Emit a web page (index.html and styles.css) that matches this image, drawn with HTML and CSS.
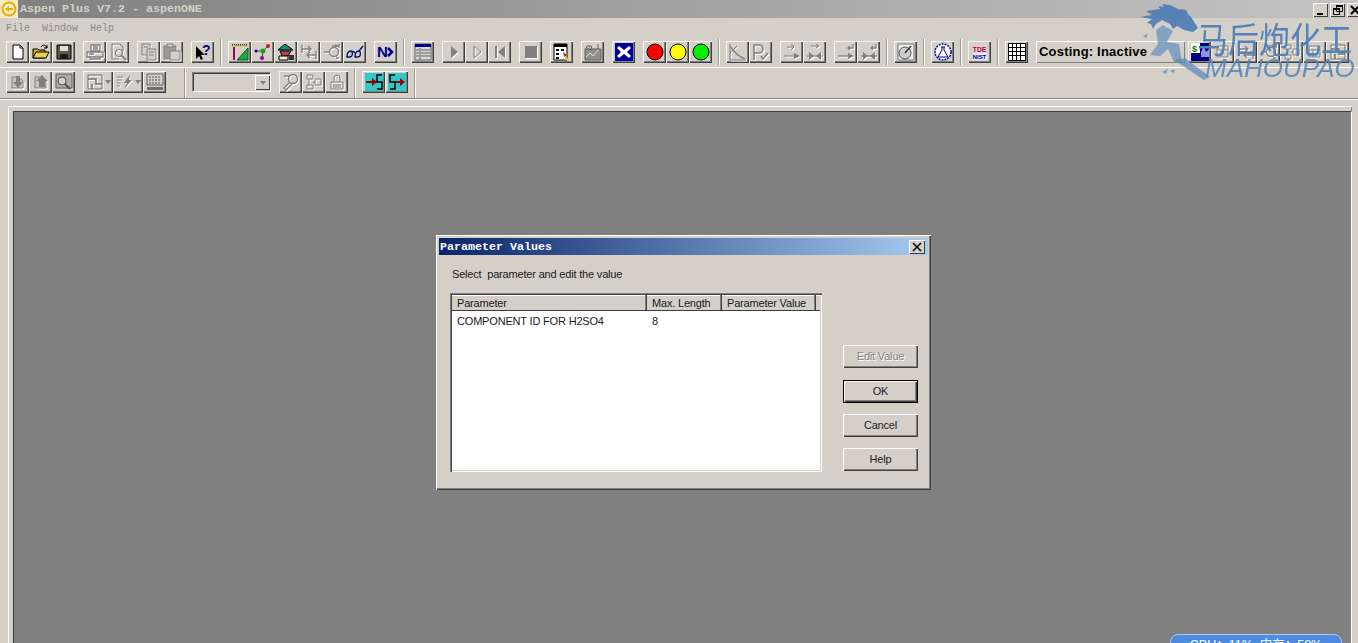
FILE: index.html
```html
<!DOCTYPE html>
<html lang="en">
<head>
<meta charset="utf-8">
<title>Aspen Plus V7.2 - aspenONE</title>
<link rel="stylesheet" href="styles.css">
</head>
<body>
<svg class="defs" width="0" height="0">
  <symbol id="i-new" viewBox="0 0 18 18"><path d="M4 2h7l3 3v11H4z" fill="#fff" stroke="#000"/><path d="M11 2v3h3" fill="none" stroke="#000"/></symbol>
  <symbol id="i-open" viewBox="0 0 18 18"><path d="M1 15V6h5l1 1h6v8z" fill="#c8b030" stroke="#000"/><path d="M1 15l3-6h13l-3 6z" fill="#e8d050" stroke="#000"/><path d="M9 4c2-3 5-2 6 1M15 2v3h-3" fill="none" stroke="#000"/></symbol>
  <symbol id="i-save" viewBox="0 0 18 18"><path d="M2 2h14v14H2z" fill="#5a5a40" stroke="#000"/><path d="M5 3h8v5H5z" fill="#ddd"/><path d="M5 11h8v5H5z" fill="#1a1a1a"/></symbol>
  <symbol id="i-print" viewBox="0 0 18 18"><g fill="none" stroke="#808080" stroke-width="1.300"><path d="M5 2h9v6H5zM1 9h16v5H1zM4 14v2h10v-2"/><path d="M3 11h5M7 4h5M7 6h5"/></g></symbol>
  <symbol id="i-preview" viewBox="0 0 18 18"><g fill="none" stroke="#808080" stroke-width="1.200"><path d="M3 1h8l3 3v4M3 1v15h7"/><circle cx="10" cy="10" r="3.500"/><path d="M12 12l5 5" stroke-width="2"/></g></symbol>
  <symbol id="i-copy" viewBox="0 0 18 18"><g fill="#d4d0c8" stroke="#808080"><path d="M2 1h8v11H2z"/><path d="M7 6h9v11H7z"/><path d="M9 9h5M9 12h5M4 4h4"/></g></symbol>
  <symbol id="i-paste" viewBox="0 0 18 18"><g stroke="#808080"><path d="M1 3h12v13H1z" fill="#9c9c96"/><path d="M4 1h6v3H4z" fill="#d4d0c8"/><path d="M7 8h10v9H7z" fill="#d4d0c8"/></g></symbol>
  <symbol id="i-flow" viewBox="0 0 18 18"><path d="M1 2h16" stroke="#000" stroke-width="1.500" stroke-dasharray="1 1"/><path d="M1 3h16" stroke="#e0c020"/><path d="M3 4v13" stroke="#a00060" stroke-width="2"/><path d="M6 17L17 5v12z" fill="#20a840" stroke="#006020"/></symbol>
  <symbol id="i-mol" viewBox="0 0 18 18"><path d="M2 8h7l5-5M9 8l-1 7" stroke="#444" fill="none"/><circle cx="2" cy="8" r="1.500" fill="#0000c0"/><circle cx="9" cy="8" r="2.500" fill="#20a020"/><circle cx="14" cy="3" r="2" fill="#c02020"/><circle cx="8" cy="15" r="2" fill="#a00090"/></symbol>
  <symbol id="i-house" viewBox="0 0 18 18"><path d="M1 7l7-6 8 6z" fill="#10907c" stroke="#000"/><path d="M3 8h11l-3 5H5z" fill="#c04060" stroke="#000"/><path d="M2 13h9v4H2z" fill="#f0e8d0" stroke="#000"/><path d="M12 12h5v5h-5z" fill="#333"/></symbol>
  <symbol id="i-swap" viewBox="0 0 18 18"><g fill="none" stroke="#808080" stroke-width="1.400"><path d="M2 6h9M8 3l3 3-3 3"/><path d="M16 12H7M10 9l-3 3 3 3"/><path d="M2 2v8M16 8v8"/></g></symbol>
  <symbol id="i-pump" viewBox="0 0 18 18"><g fill="none" stroke="#808080" stroke-width="1.400"><path d="M1 9h6"/><circle cx="11" cy="9" r="4.500"/><path d="M9 3h6M13 15h3M16 1v4M12 2l3 1-3 1"/></g></symbol>
  <symbol id="i-glass" viewBox="0 0 18 18"><g fill="none" stroke="#001070" stroke-width="1.300"><path d="M1 14c0-4 2-6 4-6s2 6-1 6-3 0-3 0zM9 14c0-4 2-6 4-6s2 6-1 6-3 0-3 0z"/><path d="M5 9c1-1 3-1 4 1M13 8l4-5"/></g></symbol>
  <symbol id="i-table" viewBox="0 0 18 18"><path d="M1 1h16v16H1z" fill="#d8d8d8" stroke="#606060"/><path d="M1 1h16v3H1z" fill="#00008c"/><path d="M6 5v12M7 7h9M7 10h9M7 13h9M2 7h3M2 10h3M2 13h3" stroke="#606060"/></symbol>
  <symbol id="i-play" viewBox="0 0 18 18"><path d="M6 3l7 6-7 6z" fill="#808080"/></symbol>
  <symbol id="i-step" viewBox="0 0 18 18"><path d="M6 3l7 6-7 6z" fill="none" stroke="#808080"/></symbol>
  <symbol id="i-rew" viewBox="0 0 18 18"><path d="M4 3h2v12H4zM14 3v12L7 9z" fill="#808080"/></symbol>
  <symbol id="i-stop" viewBox="0 0 18 18"><path d="M3 3h12v12H3z" fill="#808080"/></symbol>
  <symbol id="i-film" viewBox="0 0 18 18"><path d="M1 1h13v16H1z" fill="#fff" stroke="#000"/><path d="M1 1h13v3H1z" fill="#000"/><path d="M3 6h3v2H3zM3 10h3v2H3zM3 14h3v2H3zM8 6h3v2H8z" fill="#000"/><path d="M10 9l4 3-3 2z" fill="#c03020"/><path d="M12 13l5 4h-5z" fill="#f0c020"/></symbol>
  <symbol id="i-chart" viewBox="0 0 18 18"><path d="M1 6h16v11H1z" fill="#909088" stroke="#606060"/><path d="M2 14l4-4 3 3 5-6" stroke="#e0e0e0" fill="none"/><path d="M3 3h4l1 3H2zM14 1v5" stroke="#606060" fill="#c0c0c0"/></symbol>
  <symbol id="i-x" viewBox="0 0 18 18"><path d="M0 0h18v18H0z" fill="#0000a0"/><path d="M4 3l5 4 5-4 2 2-4 4 4 4-2 2-5-4-5 4-2-2 4-4-4-4z" fill="#fff"/></symbol>
  <symbol id="i-red" viewBox="0 0 18 18"><circle cx="9" cy="9" r="8" fill="#fe0000" stroke="#000"/></symbol>
  <symbol id="i-yellow" viewBox="0 0 18 18"><circle cx="9" cy="9" r="8" fill="#fefe00" stroke="#000"/></symbol>
  <symbol id="i-green" viewBox="0 0 18 18"><circle cx="9" cy="9" r="8" fill="#00f000" stroke="#000"/></symbol>
  <symbol id="i-curve" viewBox="0 0 18 18"><g fill="none" stroke="#808080"><path d="M1 1v16h16"/><path d="M1 3c4 6 9 11 15 13" stroke-width="1.500"/><path d="M1 10L8 3"/></g></symbol>
  <symbol id="i-pcheck" viewBox="0 0 18 18"><g fill="none" stroke="#808080" stroke-width="1.600"><path d="M2 17V2h5a4 4 0 0 1 0 8H2"/><path d="M9 13l2 3 5-6"/></g></symbol>
  <symbol id="i-arrows" viewBox="0 0 18 18"><g fill="none" stroke="#808080"><path d="M4 4h6M8 1l3 3-3 3" /><path d="M1 13h11"/></g><path d="M11 10l6 3-6 3z" fill="#808080"/></symbol>
  <symbol id="i-merge" viewBox="0 0 18 18"><g fill="none" stroke="#808080"><path d="M5 3h7M10 1l3 2-3 2"/><path d="M1 13h16"/></g><path d="M3 9l5 4-5 4zM15 9l-5 4 5 4z" fill="#808080"/></symbol>
  <symbol id="i-aret" viewBox="0 0 18 18"><g fill="none" stroke="#808080" stroke-width="1.300"><path d="M11 5h5V1M13 3l-2 2 2 2"/><path d="M1 13h11"/></g><path d="M11 10l6 3-6 3z" fill="#808080"/></symbol>
  <symbol id="i-mret" viewBox="0 0 18 18"><g fill="none" stroke="#808080" stroke-width="1.300"><path d="M11 5h5V1M13 3l-2 2 2 2"/><path d="M1 13h16"/></g><path d="M3 9l5 4-5 4zM15 9l-5 4 5 4z" fill="#808080"/></symbol>
  <symbol id="i-gauge" viewBox="0 0 18 18"><path d="M1 1h16v16H1z" fill="#eee" stroke="#777"/><circle cx="8" cy="10" r="6" fill="#ccc" stroke="#555"/><path d="M8 10l6-7" stroke="#333" stroke-width="1.500"/></symbol>
  <symbol id="i-flask" viewBox="0 0 18 18"><circle cx="9" cy="9" r="8" fill="#fff" stroke="#0000a0" stroke-dasharray="2 1" stroke-width="1.500"/><path d="M7 4h4M8 4v3l-4 7h10l-4-7V4" fill="none" stroke="#0000a0"/></symbol>
  <symbol id="i-grid" viewBox="0 0 18 18"><path d="M0.500 0.500h17v17H.5zM.5 4.500h17M.5 8.500h17M.5 12.500h17M4.500 .5v17M8.500 .5v17M12.500 .5v17" fill="#fff" stroke="#000"/></symbol>
  <symbol id="i-faint" viewBox="0 0 18 18"><g fill="none" stroke="#808080"><path d="M3 3h11v11H3zM3 7h11M7 7v7"/></g></symbol>
  <symbol id="i-down" viewBox="0 0 18 18"><path d="M3 4h7l4 4v7H3z" fill="#c8c4bc" stroke="#808080"/><path d="M7 3h4v6h3l-5 6-5-6h3z" fill="#808080"/></symbol>
  <symbol id="i-up" viewBox="0 0 18 18"><path d="M3 4h7l4 4v7H3z" fill="#c8c4bc" stroke="#808080"/><path d="M10 2l6 6h-3v6H7V8H4z" fill="#808080"/></symbol>
  <symbol id="i-screen" viewBox="0 0 18 18"><path d="M1 1h16v14H1z" fill="#b0aca4" stroke="#606060"/><circle cx="7" cy="8" r="4" fill="#d4d0c8" stroke="#505050"/><path d="M10 11l5 5" stroke="#505050" stroke-width="2"/></symbol>
  <symbol id="i-plan" viewBox="0 0 18 18"><g fill="none" stroke="#707070"><path d="M2 2h14v14H2z"/><path d="M2 6h8v5h6M6 11v5" stroke-width="1.500"/></g></symbol>
  <symbol id="i-bolt" viewBox="0 0 18 18"><g fill="none" stroke="#808080"><path d="M1 4h6M1 7h5M1 10h4M1 13h3"/></g><path d="M14 2L8 10h3l-3 6 8-9h-3z" fill="#808080"/></symbol>
  <symbol id="i-kbd" viewBox="0 0 18 18"><path d="M1 1h16v11H1z" fill="#d4d0c8" stroke="#606060"/><path d="M3 4h12M3 7h12M3 10h12" stroke="#505050" stroke-dasharray="2 1"/><path d="M1 14h16v3H1z" fill="#707070"/></symbol>
  <symbol id="i-find" viewBox="0 0 18 18"><g fill="none" stroke="#808080" stroke-width="1.400"><circle cx="11" cy="6" r="4.500"/><path d="M8 9l-6 6 2 2 6-6M2 3h5"/></g></symbol>
  <symbol id="i-blocks" viewBox="0 0 18 18"><g fill="none" stroke="#808080"><path d="M2 2h6v4H2zM2 12h6v4H2zM10 6h6v6h-6zM4 6v6M8 9h2"/></g></symbol>
  <symbol id="i-lock" viewBox="0 0 18 18"><g fill="none" stroke="#808080"><path d="M3 9h12v7H3zM6 9V5a3 3 0 0 1 6 0v4M5 12h8M5 14h8"/></g></symbol>
  <symbol id="i-sin" viewBox="0 0 18 18"><path d="M0 0h18v18H0z" fill="#30c8c8"/><path d="M1 9h8" stroke="#a00000" stroke-width="2"/><path d="M7 5l5 4-5 4z" fill="#a00000"/><path d="M17 2h-5v7h5v7h-5" fill="none" stroke="#000" stroke-width="1.500"/></symbol>
  <symbol id="i-sout" viewBox="0 0 18 18"><path d="M0 0h18v18H0z" fill="#30c8c8"/><path d="M6 9h8" stroke="#a00000" stroke-width="2"/><path d="M12 5l5 4-5 4z" fill="#a00000"/><path d="M7 2H2v7h5v7H2" fill="none" stroke="#000" stroke-width="1.500"/></symbol>
</svg>

<div class="app">
  <header class="titlebar">
    <svg class="appicon" viewBox="0 0 18 18"><path d="M0 0h18v18H0z" fill="#f6ecc0"/><circle cx="9" cy="9" r="6.500" fill="#fff2b8" stroke="#e8a818" stroke-width="2"/><path d="M5 9l4-3v2h4v2H9v2z" fill="#e8a818"/></svg>
    <span class="apptitle">Aspen Plus V7.2 - aspenONE</span>
    <div class="winbtns">
      <span class="winbtn"><svg viewBox="0 0 12 12"><path d="M2 9h6v2H2z"/></svg></span>
      <span class="winbtn"><svg viewBox="0 0 12 12"><path d="M4.500 1.500h6v6h-6zM1.500 4.500h6v6h-6z" fill="#d4d0c8" stroke="#000"/><path d="M4 1h7v2H4zM1 4h7v2H1z"/></svg></span>
      <span class="winbtn"><svg viewBox="0 0 12 12"><path d="M2 2l8 8M10 2l-8 8" stroke="#000" stroke-width="2"/></svg></span>
    </div>
  </header>

  <nav class="menubar"><span>File</span><span>Window</span><span>Help</span></nav>

  <div class="toolbar row1">
    <div class="grp"><b class="tb"><svg><use href="#i-new"/></svg></b><b class="tb"><svg><use href="#i-open"/></svg></b><b class="tb"><svg><use href="#i-save"/></svg></b></div>
    <div class="grp"><b class="tb"><svg class="dis"><use href="#i-print"/></svg></b><b class="tb"><svg class="dis"><use href="#i-preview"/></svg></b></div>
    <div class="grp"><b class="tb"><svg class="dis"><use href="#i-copy"/></svg></b><b class="tb"><svg class="dis"><use href="#i-paste"/></svg></b></div>
    <div class="grp sep"><b class="tb"><svg viewBox="0 0 18 18"><path d="M2 3v13l3-3 2 4 2-1-2-4h4z" fill="#000"/><text x="8" y="12" class="g-q">?</text></svg></b></div>
    <div class="grp"><b class="tb"><svg><use href="#i-flow"/></svg></b><b class="tb"><svg><use href="#i-mol"/></svg></b><b class="tb"><svg><use href="#i-house"/></svg></b><b class="tb"><svg class="dis"><use href="#i-swap"/></svg></b><b class="tb"><svg class="dis"><use href="#i-pump"/></svg></b><b class="tb"><svg><use href="#i-glass"/></svg></b></div>
    <div class="grp sep"><b class="tb"><svg viewBox="0 0 18 18"><text x="0" y="14" class="g-n">N</text><path d="M11 5l4 4-4 4" fill="none" stroke="#000090" stroke-width="2.500"/></svg></b></div>
    <div class="grp"><b class="tb"><svg><use href="#i-table"/></svg></b></div>
    <div class="grp"><b class="tb"><svg class="dis"><use href="#i-play"/></svg></b><b class="tb"><svg class="dis"><use href="#i-step"/></svg></b><b class="tb"><svg class="dis"><use href="#i-rew"/></svg></b></div>
    <div class="grp"><b class="tb"><svg class="dis"><use href="#i-stop"/></svg></b></div>
    <div class="grp"><b class="tb"><svg><use href="#i-film"/></svg></b></div>
    <div class="grp"><b class="tb"><svg><use href="#i-chart"/></svg></b></div>
    <div class="grp"><b class="tb"><svg><use href="#i-x"/></svg></b></div>
    <div class="grp sep"><b class="tb"><svg><use href="#i-red"/></svg></b><b class="tb"><svg><use href="#i-yellow"/></svg></b><b class="tb"><svg><use href="#i-green"/></svg></b></div>
    <div class="grp"><b class="tb"><svg class="dis"><use href="#i-curve"/></svg></b><b class="tb"><svg class="dis"><use href="#i-pcheck"/></svg></b></div>
    <div class="grp"><b class="tb"><svg class="dis"><use href="#i-arrows"/></svg></b><b class="tb"><svg class="dis"><use href="#i-merge"/></svg></b></div>
    <div class="grp sep"><b class="tb"><svg class="dis"><use href="#i-aret"/></svg></b><b class="tb"><svg class="dis"><use href="#i-mret"/></svg></b></div>
    <div class="grp sep"><b class="tb"><svg><use href="#i-gauge"/></svg></b></div>
    <div class="grp sep"><b class="tb"><svg><use href="#i-flask"/></svg></b></div>
    <div class="grp sep"><b class="tb"><svg viewBox="0 0 18 20"><path d="M1 1h16v18H1z" fill="#d8d0e0"/><text x="1" y="10" class="g-tde">TDE</text><path d="M1 11h16v8H1z" fill="#e8e8f8"/><text x="1" y="18" class="g-nist">NIST</text></svg></b></div>
    <div class="grp"><b class="tb"><svg><use href="#i-grid"/></svg></b></div>
    <div class="costing">Costing: Inactive</div>
    <div class="grp tight"><b class="tb"><svg viewBox="0 0 18 18"><path d="M0 0h18v18H0z" fill="#00007c"/><path d="M0 0h9v10H0z" fill="#fff"/><text x="1" y="9" class="g-cost">$</text><path d="M10 9l3-6 2 6 3-3v8H10z" fill="#9090f0"/></svg></b><b class="tb"><svg class="dis"><use href="#i-faint"/></svg></b><b class="tb"><svg class="dis"><use href="#i-swap"/></svg></b><b class="tb"><svg class="dis"><use href="#i-pump"/></svg></b><b class="tb"><svg class="dis"><use href="#i-blocks"/></svg></b><b class="tb"><svg class="dis"><use href="#i-faint"/></svg></b><b class="tb"><svg class="dis"><use href="#i-plan"/></svg></b></div>
  </div>

  <div class="toolbar row2">
    <div class="grp"><b class="tb"><svg class="dis"><use href="#i-down"/></svg></b><b class="tb"><svg class="dis"><use href="#i-up"/></svg></b><b class="tb"><svg><use href="#i-screen"/></svg></b></div>
    <div class="grp sep wide-sep"><b class="tb wide"><svg class="dis"><use href="#i-plan"/></svg><i class="caret"></i></b><b class="tb wide"><svg class="dis"><use href="#i-bolt"/></svg><i class="caret"></i></b><b class="tb"><svg><use href="#i-kbd"/></svg></b></div>
    <div class="grp">
      <div class="combo"><span class="combo-btn"><i class="caret"></i></span></div>
    </div>
    <div class="grp sep"><b class="tb"><svg class="dis"><use href="#i-find"/></svg></b><b class="tb"><svg class="dis"><use href="#i-blocks"/></svg></b><b class="tb"><svg class="dis"><use href="#i-lock"/></svg></b></div>
    <div class="grp sep"><b class="tb"><svg><use href="#i-sin"/></svg></b><b class="tb"><svg><use href="#i-sout"/></svg></b></div>
  </div>

  <main class="frame">
    <div class="client"></div>
  </main>

  <section class="dialog">
    <div class="dlg-title"><span>Parameter Values</span><span class="dlg-close"><svg viewBox="0 0 10 10"><path d="M1 1l8 8M9 1L1 9" stroke="#000" stroke-width="1.600"/></svg></span></div>
    <div class="dlg-body">
      <p class="dlg-prompt">Select&nbsp; parameter and edit the value</p>
      <div class="dlg-main">
        <div class="list">
          <div class="list-head"><span class="c1">Parameter</span><span class="c2">Max. Length</span><span class="c3">Parameter Value</span><span class="c4"></span></div>
          <div class="list-row"><span class="c1">COMPONENT ID FOR H2SO4</span><span class="c2">8</span></div>
        </div>
        <div class="dlg-btns">
          <button class="btn disabled" type="button">Edit Value</button>
          <button class="btn default" type="button">OK</button>
          <button class="btn" type="button">Cancel</button>
          <button class="btn" type="button">Help</button>
        </div>
      </div>
    </div>
  </section>

  <div class="watermark">
    <svg class="horse" viewBox="0 0 80 85">
      <path d="M0 17L12 15 6 11 20 9 18 6 24 7 22 4 30 5 38 9 46 10 48 14 51 17 58 28 53 32 44 30 37 26 33 29 30 24 22 20 16 24 13 29 11 24 7 23 12 19Z" fill="#4a7cb4" opacity=".9"/>
      <path d="M16 30L23 25 33 31 27 42 39 44 42 62 34 62 28 49 20 56 10 55 18 44Z" fill="#6a92bf" opacity=".75"/>
      <path d="M34 60L45 58 70 77 64 80ZM22 72l6-3-2 5zM30 71l5-2-1 4zM3 36l5-2-2 4z" fill="#5a86b8" opacity=".7"/>
    </svg>
    <div class="wm-cn">马后炮化工</div>
    <div class="wm-en">MAHOUPAO</div>
  </div>

  <div class="cpu">CPU：11%&nbsp; 内存：58%</div>
</div>
</body>
</html>
```
FILE: styles.css
```css
html, body { margin: 0; padding: 0; height: 100%; overflow: hidden; }
body { background: #d4d0c8; font-family: "Liberation Sans", Arial, sans-serif; }
.defs { position: absolute; }
.g-q { font: bold 14px "Liberation Sans", sans-serif; fill: #000090; }
.g-n { font: bold 15px "Liberation Sans", sans-serif; fill: #000090; }
.g-tde { font: bold 7.5px "Liberation Sans", sans-serif; fill: #c00020; }
.g-nist { font: bold 6.5px "Liberation Sans", sans-serif; fill: #0000a0; }
.g-cost { font: bold 9px "Liberation Sans", sans-serif; fill: #008000; }

.app { position: relative; width: 1358px; height: 643px; overflow: hidden; background: #d4d0c8; display: flex; flex-direction: column; }

.titlebar { height: 18px; flex: none; display: flex; align-items: center; background: linear-gradient(90deg, #808080, #c4c4c4); }
.appicon { width: 18px; height: 18px; flex: none; }
.apptitle { margin-left: 2px; font: bold 11.67px "Liberation Mono", monospace; color: #d4d0c8; white-space: nowrap; }
.winbtns { margin-left: auto; display: flex; gap: 2px; margin-top: 1px; margin-right: -4px; }
.winbtn { width: 15px; height: 14px; background: #d4d0c8; box-shadow: inset 1px 1px 0 #fff, inset -1px -1px 0 #404040; display: flex; align-items: center; justify-content: center; }
.winbtn svg { width: 12px; height: 12px; }

.menubar { height: 21px; flex: none; display: flex; gap: 12px; padding: 3px 6px 0; box-sizing: border-box; font: 10px/15px "Liberation Mono", monospace; color: #8c8982; }

.toolbar { display: flex; flex: none; align-items: flex-start; gap: 8px; padding-left: 6px; box-sizing: border-box; }
.row1 { height: 28px; padding-top: 2px; box-shadow: 0 1px 0 #fff; }
.row2 { height: 31px; margin-top: 1px; padding-top: 3px; border-bottom: 1px solid #808080; box-shadow: 0 1px 0 #fff; }

.grp { display: flex; position: relative; }
.grp.tight { margin-left: -5px; }
.grp.sep { margin-right: 6px; }
.grp.sep::after { content: ""; position: absolute; right: -7px; top: -2px; height: 26px; width: 1px; background: #9a9890; box-shadow: 1px 0 0 #fff; }
.row2 .grp.sep::after { top: -3px; height: 30px; }
.grp.wide-sep { margin-right: 18px; }
.grp.wide-sep::after { right: -19px; }

.tb { width: 23px; height: 22px; flex: none; display: flex; align-items: center; justify-content: center; box-sizing: border-box; background: #d4d0c8; box-shadow: inset 1px 1px 0 #f6f4f0, inset -1px -1px 0 #404040, inset -2px -2px 0 #808080; }
.tb svg { width: 18px; height: 18px; display: block; }
.tb svg.dis { filter: drop-shadow(1px 1px 0 #fff); }
.tb.wide { width: 30px; justify-content: flex-start; padding-left: 3px; gap: 1px; }
.caret { display: block; width: 0; height: 0; border: 3px solid transparent; border-top: 4px solid #808080; border-bottom: 0; }

.combo { width: 79px; height: 20px; margin-top: 1px; background: #d4d0c8; box-sizing: border-box; border: 1px solid; border-color: #808080 #fff #fff #808080; box-shadow: inset 1px 1px 0 #404040; display: flex; justify-content: flex-end; padding: 2px 0 1px; }
.combo-btn { width: 15px; height: 15px; box-shadow: inset 1px 1px 0 #fff, inset -1px -1px 0 #404040; display: flex; align-items: center; justify-content: center; }

.costing { width: 149px; height: 22px; box-sizing: border-box; padding-left: 3px; font: bold 13px/22px "Liberation Sans", sans-serif; letter-spacing: .2px; color: #000; white-space: nowrap; box-shadow: inset 1px 1px 0 #fff, inset -1px -1px 0 #808080; }

.frame { flex: 1; margin: 7px 6px 0 8px; padding: 5px 0 0 5px; min-height: 0; background: #d4d0c8; box-shadow: inset 1px 1px 0 #fff, inset -1px 0 0 #808080; display: flex; }
.client { flex: 1; background: #808080; border-top: 1px solid #404040; border-left: 1px solid #404040; border-right: 1px solid #fff; }

.dialog { position: absolute; left: 436px; top: 235px; width: 495px; height: 255px; box-sizing: border-box; padding: 3px; background: #d4d0c8; box-shadow: inset 1px 1px 0 #fff, inset -1px -1px 0 #404040, inset -2px -2px 0 #808080; display: flex; flex-direction: column; }
.dlg-title { height: 17px; flex: none; display: flex; align-items: center; justify-content: space-between; padding-left: 1px; padding-right: 3px; background: linear-gradient(90deg, #0a246a, #a6caf0); font: bold 11.67px "Liberation Mono", monospace; color: #fff; }
.dlg-close { width: 16px; height: 14px; background: #d4d0c8; box-shadow: inset 1px 1px 0 #fff, inset -1px -1px 0 #404040; display: flex; align-items: center; justify-content: center; }
.dlg-close svg { width: 10px; height: 10px; }
.dlg-body { flex: 1; padding: 0 10px 0 11px; font-size: 11px; letter-spacing: -0.18px; color: #1a1a1a; }
.dlg-prompt { margin: 12px 0 0 2px; line-height: 14px; }
.dlg-main { display: flex; margin-top: 12px; }
.list { width: 372px; height: 179px; box-sizing: border-box; padding: 2px; margin-right: 21px; background: #fff; box-shadow: inset 1px 1px 0 #808080, inset 2px 2px 0 #404040, inset -1px -1px 0 #fff, inset -2px -2px 0 #d4d0c8; line-height: 15px; }
.list-head { display: flex; height: 16px; background: #d4d0c8; box-shadow: inset 0 1px 0 #fff, inset 0 -1px 0 #404040; }
.list-head span { box-sizing: border-box; height: 16px; padding: 1px 0 0 5px; box-shadow: inset -1px -1px 0 #404040, inset -2px 0 0 #808080; white-space: nowrap; }
.c1 { width: 195px; flex: none; padding-left: 5px; }
.c2 { width: 75px; flex: none; }
.c3 { width: 94px; flex: none; }
.c4 { flex: 1; box-shadow: none !important; }
.list-row { display: flex; padding-top: 3px; }
.list-row span { box-sizing: border-box; padding-left: 5px; white-space: nowrap; }
.dlg-btns { display: flex; flex-direction: column; width: 75px; padding-top: 52px; gap: 11px; }
.btn { width: 75px; height: 23px; padding: 0 0 2px; font: 11px "Liberation Sans", sans-serif; letter-spacing: -0.18px; color: #1a1a1a; background: #d4d0c8; border: 0; box-shadow: inset 1px 1px 0 #fff, inset -1px -1px 0 #404040, inset -2px -2px 0 #808080; }
.btn.disabled { color: #86837d; text-shadow: 1px 1px 0 #fff; margin-bottom: 1px; }
.btn.default { box-shadow: inset 0 0 0 1px #000, inset 2px 2px 0 #fff, inset -2px -2px 0 #404040, inset -3px -3px 0 #808080; }

.watermark { position: absolute; left: 1140px; top: 0; width: 218px; height: 85px; pointer-events: none; }
.horse { position: absolute; left: 0; top: 0; width: 80px; height: 85px; }
.wm-cn { position: absolute; left: 57px; top: 20px; font: 400 31px/32px "Noto Sans CJK SC", sans-serif; color: #5583b8; transform: scaleY(1.15); transform-origin: top left; white-space: nowrap; }
.wm-en { position: absolute; left: 65px; top: 58px; font: italic 26px/20px "Liberation Sans", sans-serif; color: #5583b8; opacity: .85; white-space: nowrap; }

.cpu { position: absolute; left: 1170px; top: 634px; width: 172px; height: 30px; box-sizing: border-box; border-radius: 8px 8px 0 0; background: #4c8be0; border: 1px solid #a8c8f0; color: #fff; font: 12.5px/14px "Liberation Sans", "Noto Sans CJK SC", sans-serif; text-align: center; padding-top: 3px; }
```
